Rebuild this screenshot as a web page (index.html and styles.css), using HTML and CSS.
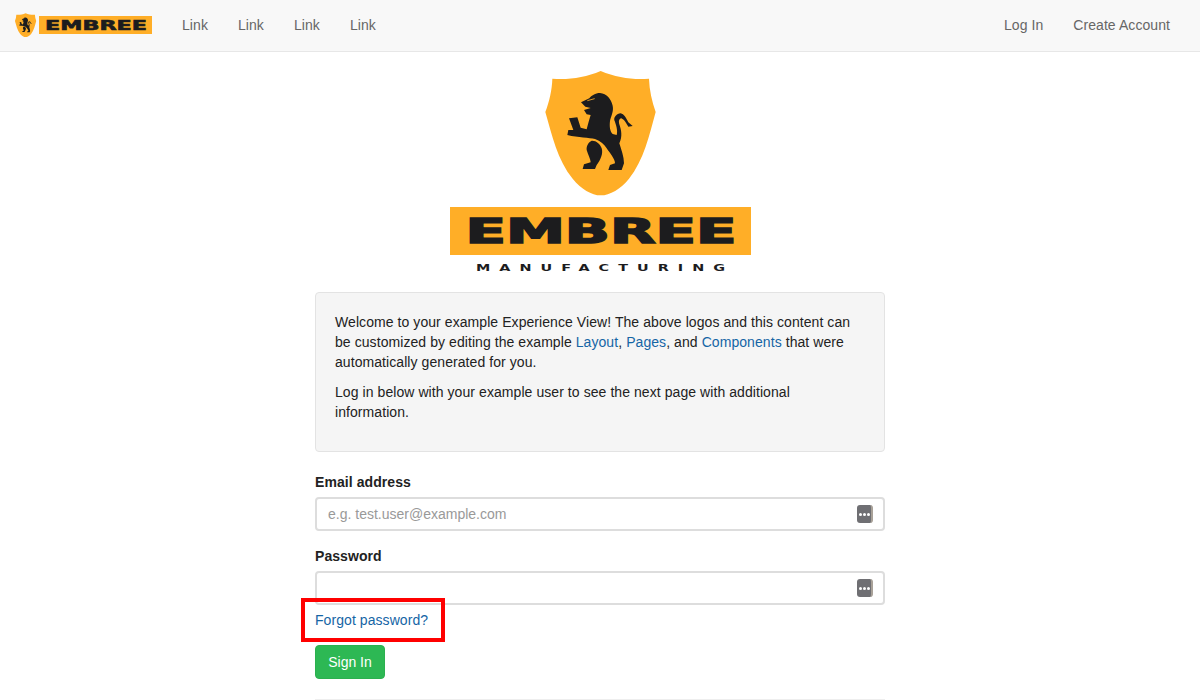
FILE: index.html
```html
<!DOCTYPE html>
<html lang="en">
  <head>
    <meta charset="UTF-8" />
    <meta name="viewport" content="width=device-width, initial-scale=1.0" />
    <title>Embree Manufacturing</title>
    <link rel="stylesheet" href="styles.css">
  </head>
  <body>
    <svg class="defs" width="0" height="0" aria-hidden="true">
      <symbol id="shield" viewBox="0 0 420 405">
        <path class="shield-fill" d="M212 18 C165 38 115 45 67 41 C66 75 58 110 46 141 C66 210 82 285 128 341 C153 372 185 391 212 391 C240 391 272 372 297 341 C342 285 358 210 377 141 C366 110 358 75 357 41 C310 45 260 38 212 18 Z" />
        <g transform="translate(90 60)">
          <path class="lion" d="M63 52 L88 40 C94 32 106 24 120 24 C140 26 154 42 158 62 C162 80 152 95 150 108 C148 125 150 140 158 147 L170 150 C174 138 168 118 163 106 C161 96 170 86 182 85 C192 87 198 98 205 112 L218 123 L205 125 C200 118 194 104 184 100 C176 102 176 110 178 118 C184 135 188 155 178 175 C184 195 192 215 192 235 L185 255 L145 255 L150 240 L165 235 C165 222 150 205 140 190 C133 178 122 168 105 162 C88 158 55 158 22 150 L25 135 L40 135 L27 100 L52 97 L62 128 L80 133 C84 118 88 102 92 90 L80 88 L72 75 L92 69 L76 65 Z" />
          <path class="lion" d="M95 167 C108 166 120 176 125 190 C130 205 122 225 110 240 L105 252 L68 252 L72 238 L92 232 C92 222 84 210 80 195 C79 182 85 172 95 167 Z" />
          <path class="lion-cut" d="M82 47 L104 41" />
        </g>
      </symbol>
    </svg>

    <nav class="navbar">
      <a class="brand" href="#">
        <svg class="brand-shield"><use href="#shield" /></svg>
        <svg class="brand-bar" viewBox="0 0 113 18">
          <rect class="bar-fill" width="113" height="18" />
          <text class="wordmark" x="6" y="14.2" textLength="102" lengthAdjust="spacingAndGlyphs">EMBREE</text>
        </svg>
      </a>
      <ul class="nav">
        <li><a href="#">Link</a></li>
        <li><a href="#">Link</a></li>
        <li><a href="#">Link</a></li>
        <li><a href="#">Link</a></li>
      </ul>
      <ul class="nav nav-right">
        <li><a href="#">Log In</a></li>
        <li><a href="#">Create Account</a></li>
      </ul>
    </nav>

    <div class="container">
      <div class="logo">
        <svg class="logo-shield"><use href="#shield" /></svg>
        <svg class="logo-bar" viewBox="0 0 301 68">
          <rect class="bar-fill" width="301" height="48" />
          <text class="wordmark" x="15.5" y="36.2" textLength="271" lengthAdjust="spacingAndGlyphs">EMBREE</text>
          <text class="subword" transform="translate(26 64) scale(1.5 1)" textLength="166">MANUFACTURING</text>
        </svg>
      </div>

      <div class="well">
        <p>Welcome to your example Experience View! The above logos and this content can be customized by editing the example <a href="#">Layout</a>, <a href="#">Pages</a>, and <a href="#">Components</a> that were automatically generated for you.</p>
        <p>Log in below with your example user to see the next page with additional information.</p>
      </div>

      <form>
        <div class="form-group">
          <label for="email">Email address</label>
          <div class="input-wrap">
            <input type="text" id="email" placeholder="e.g. test.user@example.com" />
            <span class="key-icon"><i></i><i></i><i></i></span>
          </div>
        </div>
        <div class="form-group">
          <label for="password">Password</label>
          <div class="input-wrap">
            <input type="password" id="password" />
            <span class="key-icon"><i></i><i></i><i></i></span>
          </div>
          <div class="forgot">
            <a href="#">Forgot password?</a>
            <span class="highlight"></span>
          </div>
        </div>
        <button type="button" class="btn-signin">Sign In</button>
      </form>

      <hr />
    </div>
  </body>
</html>
```

FILE: styles.css
```css
* {
  box-sizing: border-box;
}

html,
body {
  height: 700px;
  overflow: hidden;
}

body {
  font-family: "Liberation Sans", Arial, sans-serif;
  font-size: 14px;
  line-height: 20px;
  letter-spacing: 0.07px;
  color: #222;
  background-color: #fff;
  margin: 0;
}

a {
  color: #1565a5;
  text-decoration: none;
}

.defs {
  position: absolute;
}

.shield-fill,
.bar-fill {
  fill: #ffae27;
}

.lion {
  fill: #1c1c1e;
}

.lion-cut {
  fill: none;
  stroke: #ffae27;
  stroke-width: 2.5;
}

.wordmark {
  font-family: "DejaVu Sans", sans-serif;
  font-weight: bold;
  letter-spacing: 0;
  fill: #1c1c1e;
}

.navbar {
  display: flex;
  align-items: center;
  height: 52px;
  padding: 0 15px 1px;
  background-color: #f8f8f8;
  border-bottom: 1px solid #e7e7e7;
}

.brand {
  display: flex;
  align-items: center;
  margin-right: 15px;
}

.brand-shield {
  width: 27px;
  height: 26px;
  margin-left: -3px;
}

.brand-bar {
  width: 113px;
  height: 18px;
}

.brand-bar .wordmark {
  font-size: 14px;
  stroke: #1c1c1e;
  stroke-width: 0.6;
}

.nav {
  display: flex;
  list-style: none;
  margin: 0;
  padding: 0;
}

.nav a {
  display: block;
  padding: 0 15px;
  color: #666;
}

.nav-right {
  margin-left: auto;
}

.container {
  width: 570px;
  margin: 0 auto;
}

.logo {
  display: flex;
  flex-direction: column;
  align-items: center;
  padding-top: 13px;
  margin-bottom: 17px;
}

.logo-shield {
  width: 140px;
  height: 135px;
  margin-bottom: 7px;
}

.logo-bar {
  display: block;
  width: 301px;
  height: 68px;
  margin-left: 1px;
}

.logo-bar .wordmark {
  font-size: 34px;
  stroke: #1c1c1e;
  stroke-width: 1.6;
}

.subword {
  font-family: "DejaVu Sans", sans-serif;
  font-size: 9.6px;
  font-weight: bold;
  letter-spacing: 0;
  fill: #1c1c1e;
}

.well {
  padding: 19px 30px 19px 19px;
  margin-bottom: 20px;
  background-color: #f5f5f5;
  border: 1px solid #e3e3e3;
  border-radius: 4px;
}

.well p {
  margin: 0 0 10px;
}

.form-group {
  margin-bottom: 15px;
}

label {
  display: block;
  margin-bottom: 5px;
  font-weight: bold;
}

.input-wrap {
  position: relative;
}

input {
  display: block;
  width: 100%;
  height: 34px;
  padding: 6px 11px;
  font: inherit;
  letter-spacing: 0;
  color: #555;
  background-color: #fff;
  border: 2px solid #ddd;
  border-radius: 4px;
}

input::placeholder {
  color: #999;
}

.key-icon {
  position: absolute;
  top: 8px;
  right: 12px;
  display: flex;
  align-items: center;
  justify-content: center;
  gap: 1px;
  width: 16px;
  height: 18px;
  background-color: #6f6f73;
  border-right: 2px solid #a8a198;
  border-radius: 3px;
}

.key-icon i {
  width: 3px;
  height: 3px;
  background-color: #fff;
  border-radius: 50%;
}

.forgot {
  position: relative;
  margin-top: 5px;
}

.highlight {
  position: absolute;
  top: -12px;
  left: -14px;
  width: 144px;
  height: 44px;
  border: 4px solid #f00;
}

.btn-signin {
  display: block;
  width: 70px;
  height: 34px;
  padding: 0;
  font: inherit;
  letter-spacing: 0;
  color: #fff;
  background-color: #2db854;
  border: 1px solid #2bb04f;
  border-radius: 4px;
  cursor: pointer;
}

hr {
  margin: 20px 0 0;
  border: 0;
  border-top: 1px solid #eee;
}
```
